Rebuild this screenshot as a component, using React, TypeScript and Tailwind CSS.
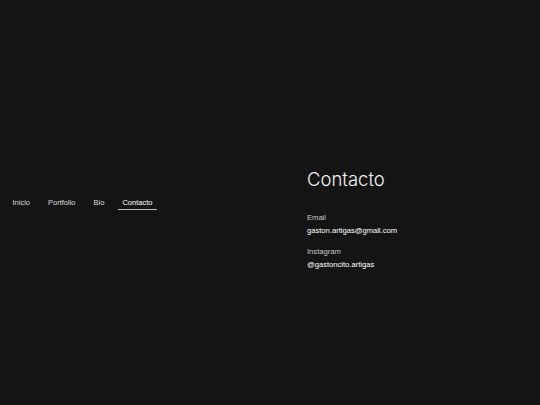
import React from "react";

const links = [
  { title: "Inicio", active: false },
  { title: "Portfolio", active: false },
  { title: "Bio", active: false },
  { title: "Contacto", active: true },
];

export default function App() {
  return (
    <div
      className="flex h-[405px] w-full bg-[#141414] text-white"
      style={{ fontFamily: "'Liberation Sans', Arial, sans-serif" }}
    >
      {/* navegación */}
      <div className="flex w-1/2 items-center pl-[8px]">
        <nav className="flex gap-[9px]">
          {links.map((l) => (
            <a
              key={l.title}
              className={`px-[4.5px] pb-[1px] pt-[3px] text-[7.5px] leading-[10px] ${
                l.active
                  ? "border-b border-[#bdbdbd] text-white"
                  : "border-b border-transparent text-[#dcdcdc]"
              }`}
            >
              {l.title}
            </a>
          ))}
        </nav>
      </div>

      {/* contacto */}
      <div className="flex w-1/2 flex-col pl-[37px] pt-[167px]">
        <h1
          className="text-[18.5px] font-light leading-[24px] text-[#f2f2f2]"
          style={{ fontFamily: "Inter, 'Liberation Sans', sans-serif" }}
        >
          Contacto
        </h1>
        <div className="mt-[21px] flex flex-col">
          <span className="text-[7.6px] leading-[12px] text-[#c8c8c8]">Email</span>
          <span className="mt-[1px] text-[7.6px] leading-[12px] text-white">
            gaston.artigas@gmail.com
          </span>
        </div>
        <div className="mt-[8.5px] flex flex-col">
          <span className="text-[7.6px] leading-[12px] text-[#c8c8c8]">Instagram</span>
          <span className="mt-[1px] text-[7.6px] leading-[12px] text-white">
            @gastoncito.artigas
          </span>
        </div>
      </div>
    </div>
  );
}
